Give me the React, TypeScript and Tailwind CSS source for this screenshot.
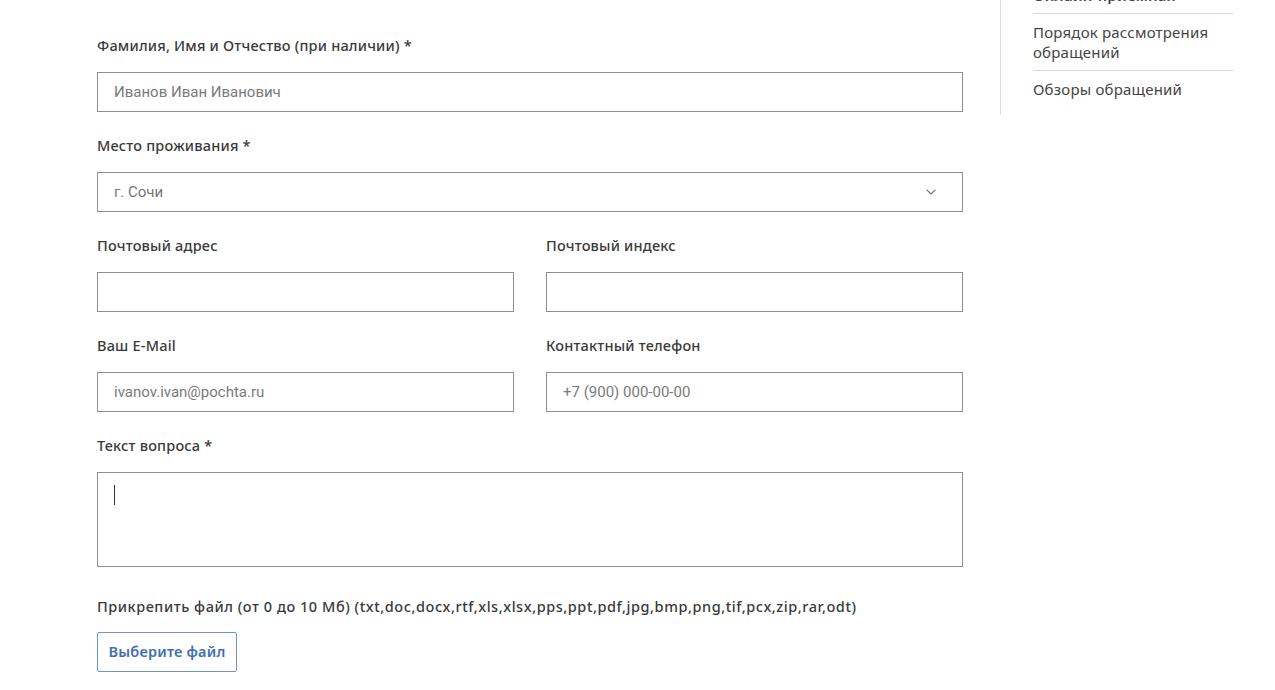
import { ChevronDown } from "lucide-react";

const labelCls =
  "block mb-[17px] text-[14.5px] leading-5 font-medium text-[#3a3a3a] font-['Noto_Sans',sans-serif]";
const boxCls =
  "block w-full h-10 px-4 border border-[#8f8f8f] bg-white text-[15px] font-['Roboto',sans-serif] outline-none";

function Field({
  label,
  placeholder,
}: {
  label: string;
  placeholder?: string;
}) {
  return (
    <div>
      <label className={labelCls + " tracking-[0.2px]"}>{label}</label>
      <input
        className={boxCls + " text-[#333] placeholder:text-[#7a7a7a]"}
        placeholder={placeholder}
      />
    </div>
  );
}

export default function App() {
  const links = [
    "Онлайн-приемная",
    "Порядок рассмотрения обращений",
    "Обзоры обращений",
  ];

  return (
    <div className="flex w-[1275px] h-[690px] overflow-hidden bg-white">
      {/* Form */}
      <div className="w-[866px] ml-[97px] pt-[35px] flex flex-col gap-[23px]">
        <Field
          label="Фамилия, Имя и Отчество (при наличии) *"
          placeholder="Иванов Иван Иванович"
        />
        <div>
          <label className={labelCls + " tracking-[0.2px]"}>
            Место проживания *
          </label>
          <div className="relative">
            <div className={boxCls + " flex items-center text-[#757575]"}>
              г. Сочи
            </div>
            <ChevronDown
              className="absolute right-6 top-1/2 -translate-y-1/2 text-[#777]"
              size={16}
              strokeWidth={1.6}
            />
          </div>
        </div>
        <div className="grid grid-cols-2 gap-x-8">
          <Field label="Почтовый адрес" />
          <Field label="Почтовый индекс" />
        </div>
        <div className="grid grid-cols-2 gap-x-8">
          <Field label="Ваш E-Mail" placeholder="ivanov.ivan@pochta.ru" />
          <Field label="Контактный телефон" placeholder="+7 (900) 000-00-00" />
        </div>
        <div>
          <label className={labelCls + " tracking-[0.2px]"}>
            Текст вопроса *
          </label>
          <div className="h-[95px] border border-[#8f8f8f] pl-4 pt-3">
            <div className="w-px h-5 bg-[#333]" />
          </div>
        </div>
        <div className="mt-[6px]">
          <label className={labelCls + " tracking-[0.55px]"}>
            Прикрепить файл (от 0 до 10 Мб)
            (txt,doc,docx,rtf,xls,xlsx,pps,ppt,pdf,jpg,bmp,png,tif,pcx,zip,rar,odt)
          </label>
          <button className="-mt-px h-10 w-[140px] border border-[#6b93c4] rounded-[2px] text-[14.5px] font-semibold tracking-[0.2px] text-[#3f6fae] font-['Noto_Sans',sans-serif]">
            Выберите файл
          </button>
        </div>
      </div>

      {/* Sidebar */}
      <div className="ml-[37px] self-start border-l border-[#dcdcdc] pl-[32px] pr-[42px] pb-2 w-[275px]">
        <ul className="-mt-[23px] w-[200px]">
          {links.map((l, i) => (
            <li
              key={l}
              className={
                "py-2 text-[15px] leading-5 tracking-[0.2px] text-[#444] font-['Noto_Sans',sans-serif] " +
                (i < links.length - 1 ? "border-b border-[#d6d6d6]" : "") +
                (i === 0 ? " font-semibold" : "")
              }
            >
              {l}
            </li>
          ))}
        </ul>
      </div>
    </div>
  );
}
